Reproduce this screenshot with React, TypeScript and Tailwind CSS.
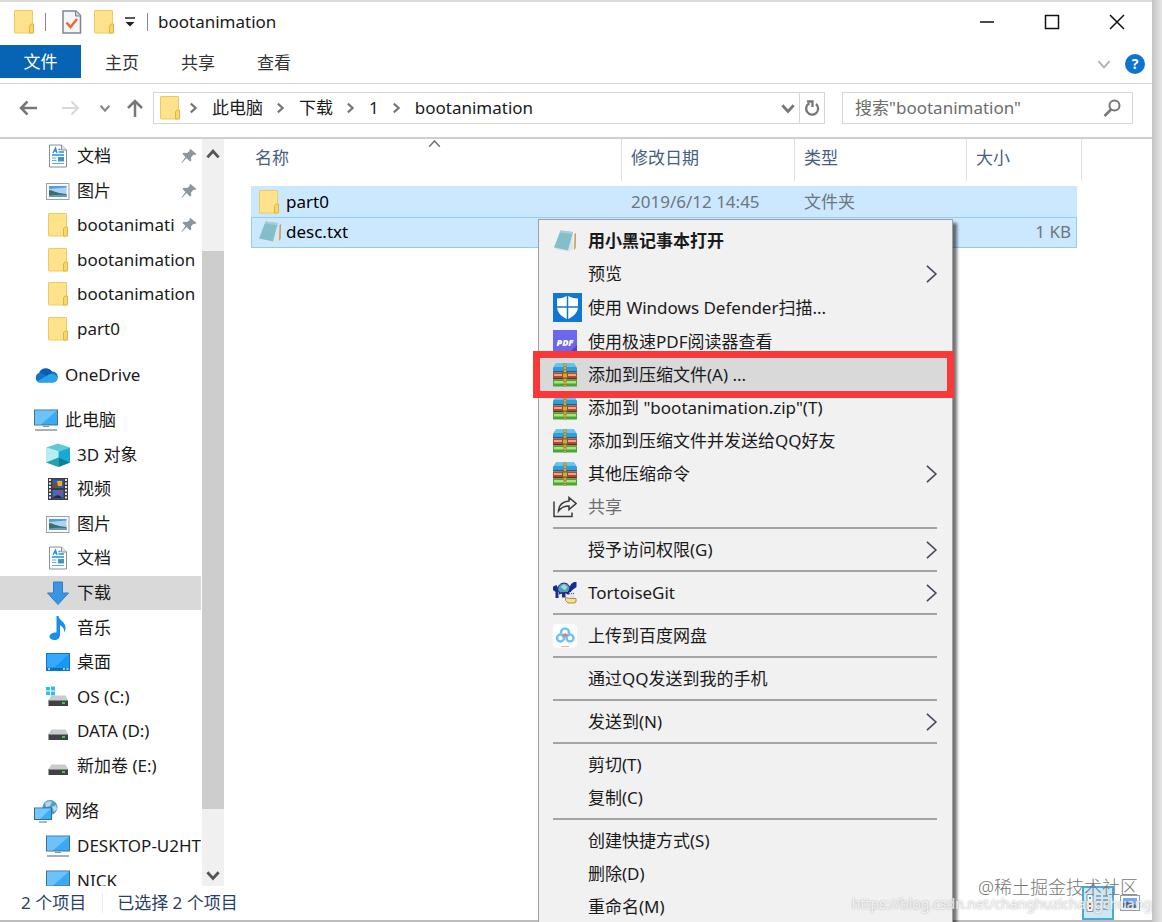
import type { ReactNode } from "react"

const FOLDER_LIGHT = "#ffe38c"

function FolderIcon() {
  return (
    <svg width="20" height="24" viewBox="0 0 20 24" className="shrink-0" aria-hidden="true">
      <rect x="0.5" y="0.5" width="18" height="22.5" rx="0.5" fill={FOLDER_LIGHT} stroke="#eccb5e" />
      <path d="M15.500 23V15.500L17 14h2.500v9z" fill="#f8d667" stroke="#e0b63f" />
    </svg>
  )
}

function DocIcon() {
  return (
    <svg width="24" height="24" viewBox="0 0 24 24" className="shrink-0" aria-hidden="true">
      <path d="M3.500 1h12l5 5v17h-17z" fill="#fff" stroke="#8a9096" />
      <path d="M15.500 1v5h5" fill="#e4e6e8" stroke="#8a9096" />
      <path d="M7 9l2.500-5 1.500 5M8 7h2.500M12.500 5.500h2M12.500 8h5.500" stroke="#2a8fd8" strokeWidth="1.300" fill="none" />
      <path d="M6 11h12" stroke="#1593e0" strokeWidth="1.500" />
      <path d="M6 14h4.500M6 16.500h4.500M6 19.500h12" stroke="#4fb0ea" />
      <rect x="12" y="13" width="6" height="4.500" fill="#4c90c0" />
    </svg>
  )
}

function PictureIcon() {
  return (
    <svg width="24" height="24" viewBox="0 0 24 24" className="shrink-0" aria-hidden="true">
      <rect x="0.500" y="4.500" width="22.500" height="16" fill="#f7f9fa" stroke="#9aa1a8" />
      <rect x="3" y="7" width="17.500" height="11" fill="#a9d4f2" />
      <path d="M3 7h17.500v1.500L3 10z" fill="#5a9be6" />
      <path d="M3 11c4 0 6 3 17.500 4v3H3z" fill="#3a7069" />
      <path d="M3 16.500c6-1 12-1 17.500-.5v2H3z" fill="#6c9bb8" />
    </svg>
  )
}

function CloudIcon() {
  return (
    <svg width="24" height="24" viewBox="0 0 24 24" className="shrink-0" aria-hidden="true">
      <path d="M5.500 19.500A5 5 0 0 1 5 10a7 7 0 0 1 12.500-1.500A5.500 5.500 0 0 1 19 19.500z" fill="#1673c8" />
      <path d="M6 9.500A7 7 0 0 1 17.500 8l1 1.500-5 3.500z" fill="#0c5cb0" />
      <path d="M3 18.500l11-6.500c4-2.500 9.500-.5 9.500 3.500 0 2.500-2 4-4.500 4H6c-1 0-2-.3-3-1z" fill="#2aa3ec" />
    </svg>
  )
}

function MonitorIcon() {
  return (
    <svg width="24" height="24" viewBox="0 0 24 24" className="shrink-0" aria-hidden="true">
      <rect x="0.500" y="2" width="23" height="15" fill="#3aa9f2" stroke="#41718f" />
      <path d="M1 2.500h22L7 16.500H1z" fill="#6cc3fa" />
      <path d="M9 18.500h6" stroke="#7f95a3" />
      <path d="M1 22h22" stroke="#a3b1bb" strokeWidth="2" />
    </svg>
  )
}

function CubeIcon() {
  return (
    <svg width="24" height="24" viewBox="0 0 24 24" className="shrink-0" aria-hidden="true">
      <path d="M0 4.500L12 .5l12 4-11.500 4z" fill="#5fc9d6" />
      <path d="M0 4.500l12.500 4v15.500L0 19.500z" fill="#b4eef0" />
      <path d="M0 19.500l12.500-5V24z" fill="#27a0ad" />
      <path d="M24 4.500l-11.500 4V24L24 19.500z" fill="#18a9d4" />
      <path d="M24 19.500l-11.500-5V24z" fill="#0f7f98" />
    </svg>
  )
}

function VideoIcon() {
  return (
    <svg width="24" height="24" viewBox="0 0 24 24" className="shrink-0" aria-hidden="true">
      <rect x="2" y="1" width="20" height="22" fill="#3b3c40" />
      <path d="M4 2v20M20 2v20" stroke="#e6e6e6" strokeWidth="2" strokeDasharray="2 1.500" />
      <rect x="6.500" y="2.500" width="11" height="8.500" fill="#3c59a8" />
      <rect x="6.500" y="13" width="11" height="8.500" fill="#4767c0" />
      <path d="M11 4h5v5h-4z" fill="#e3b326" />
      <path d="M7 7h4v4H7z" fill="#7a4a2a" />
      <path d="M13 14h2.500v2.500H13z" fill="#d83a2a" />
      <path d="M7 20l5-2 5 3H7z" fill="#1f2b4a" />
    </svg>
  )
}

function DownloadIcon() {
  return (
    <svg width="24" height="24" viewBox="0 0 24 24" className="shrink-0" aria-hidden="true">
      <path d="M7.500 1h9v11h6L12 23.500 1.500 12h6z" fill="#3b93e4" stroke="#2f7ec9" />
    </svg>
  )
}

function MusicIcon() {
  return (
    <svg width="24" height="24" viewBox="0 0 24 24" className="shrink-0" aria-hidden="true">
      <path d="M10.500 0h2c.5 4 7 6 7 11.500 0 2-.5 3.500-1.500 4.500.5-3.500-2-6-4-6.500V19c0 3-2.500 5-5.500 5S3.500 22.500 3.500 20.500s3-4.500 7-4z" fill="#1590ec" />
    </svg>
  )
}

function DesktopIcon() {
  return (
    <svg width="24" height="24" viewBox="0 0 24 24" className="shrink-0" aria-hidden="true">
      <rect x="0.500" y="3.500" width="23" height="17" fill="#1a98f5" stroke="#1479c4" />
      <path d="M1 4h22L9 17H1z" fill="#35a9fb" />
      <path d="M1 19h22" stroke="#0b5fa8" strokeWidth="1.500" />
      <path d="M2 19h2M17 19h2M20.500 19h2" stroke="#d3ebfc" strokeWidth="1.500" />
    </svg>
  )
}

function DriveIcon({ system }: { system?: boolean }) {
  return (
    <svg width="24" height="24" viewBox="0 0 24 24" className="shrink-0" aria-hidden="true">
      {system && <path d="M0 2h4v3.500H0zM5 1.500h4v4H5zM0 6.500h4V10H0zM5 6.500h4v4H5z" fill="#2cc0ea" />}
      <path d="M5.500 10.500h14L22 15H2.500z" fill="#c9cbcc" />
      <rect x="2.500" y="15" width="19.500" height="6" fill="#3f4244" />
      <path d="M2.500 15h19.500v1H2.500z" fill="#85898b" />
      <rect x="16" y="17" width="3" height="2" fill="#38d13e" />
    </svg>
  )
}

function NetworkIcon() {
  return (
    <svg width="24" height="24" viewBox="0 0 24 24" className="shrink-0" aria-hidden="true">
      <circle cx="16" cy="8.500" r="7.500" fill="#4f9fca" />
      <path d="M11 4c3-2 5-2 7-1l-2 4-4 1zM18 8l4-2 1 4-3 3z" fill="#b6d8e6" />
      <rect x="0.500" y="9" width="17" height="11.500" fill="#3fadf3" stroke="#2f6d94" />
      <path d="M1 9.500h16L6 20H1z" fill="#74c7fa" />
      <path d="M5 23h8" stroke="#8ca3b2" strokeWidth="1.500" />
    </svg>
  )
}

function PinIcon() {
  return (
    <svg width="16" height="16" viewBox="0 0 16 16" className="shrink-0" aria-hidden="true">
      <path d="M9.500 1l6 5-1.500 1-1.500-.3L10 9.500l.3 3-1.300 1L5.500 10 1 15l-.5-.5L4.500 9 1.500 6l1-1.300 3.500.3L8.700 3l-.2-1.200z" fill="#8a979f" />
    </svg>
  )
}

function NotebookIcon() {
  return (
    <svg width="24" height="24" viewBox="0 0 24 24" className="shrink-0" aria-hidden="true">
      <path d="M1 18.500l13.500 3 5-18 1 16-4 3L3 20.500z" fill="#dfe6e6" />
      <path d="M7.500 1.500l12.500 1.500-5 18.500L1 18.500z" fill="#83bfca" />
      <path d="M7.500 1.500l12.500 1.500-.7 2L7 3.500z" fill="#a9cfd4" />
      <path d="M21.500 5l1.500-1-.3 15-1.700 2z" fill="#c79b58" />
    </svg>
  )
}

function DefenderIcon() {
  return (
    <svg width="29" height="29" viewBox="0 0 29 29" className="shrink-0" aria-hidden="true">
      <rect width="29" height="29" fill="#0f77d4" />
      <path d="M14.500 2.500c3 2 6.500 3 10.500 3v8c0 6-4.500 10-10.500 13C8.500 23.500 4 19.500 4 13.500v-8c4 0 7.500-1 10.500-3z" fill="#fff" />
      <path d="M14.500 2v25M3 14h23" stroke="#0f77d4" strokeWidth="1.500" />
    </svg>
  )
}

function PdfIcon() {
  return (
    <svg width="24" height="24" viewBox="0 0 24 24" className="shrink-0" aria-hidden="true">
      <rect width="24" height="24" fill="#6a66ee" />
      <path d="M24 15v9h-9z" fill="#4c47c4" />
      <text x="12" y="15.500" textAnchor="middle" fontFamily="Open Sans, sans-serif" fontSize="9" fontWeight="800" fontStyle="italic" fill="#fff">
        PDF
      </text>
    </svg>
  )
}

function ZipIcon() {
  return (
    <svg width="24" height="24" viewBox="0 0 24 24" className="shrink-0" aria-hidden="true">
      <path d="M3 .5h18l3 4.500v4H0V5z" fill="#2f9fd6" />
      <path d="M3 .5h18L23 4H1z" fill="#63c4ee" />
      <path d="M0 8h24v1.500H0z" fill="#1f5f88" />
      <rect y="9.500" width="24" height="6.500" fill="#b5482f" />
      <rect x="1" y="11" width="22" height="2" fill="#e8a48c" />
      <path d="M0 15h24v1.500H0z" fill="#6e2a1c" />
      <rect y="16.500" width="24" height="7" fill="#4aa63a" />
      <rect x="1" y="18" width="22" height="2.500" fill="#a6e57a" />
      <rect x="10.500" y=".5" width="3" height="23" fill="#a8812f" />
      <path d="M12 1v22" stroke="#ecd07a" strokeDasharray="2 1" />
      <rect x="9.500" y="10" width="5" height="5" fill="#d8a53c" stroke="#7a5a1d" />
    </svg>
  )
}

function ShareIcon() {
  return (
    <svg width="24" height="24" viewBox="0 0 24 24" className="shrink-0" fill="none" stroke="#3b3b3b" strokeWidth="1.500" aria-hidden="true">
      <path d="M1 6.500v15h18v-4" />
      <path d="M16 2.500l7 6-7 6V11c-5 0-8 1.500-10.500 5 .5-6.500 4.500-9.500 10.500-10z" />
    </svg>
  )
}

function TortoiseIcon() {
  return (
    <svg width="24" height="24" viewBox="0 0 24 24" className="shrink-0" aria-hidden="true">
      <path d="M0 5.500l3.500-1.500 2 4v9H2.500v-6L0 9z" fill="#1b2c96" />
      <path d="M16 8l2-5 3-2h2.500v5L20 8.500l-2 2v3h-3.500l-2-1.500v4.500H9v-4l-3 1v-3z" fill="#1b2c96" />
      <path d="M4.500 9c.5-9 12-9 12.500-1l-2 3.500-8 .5z" fill="#4c9fb9" stroke="#15216c" />
      <path d="M7.500 6L11 3l3.500 3-2.500 3.500z" fill="#9bd7df" />
      <path d="M12.500 16.500l4 1h6.500v3.500l-2 1h-6l-2.500-2.500z" fill="#f2de95" stroke="#b08f45" />
      <path d="M16.500 11h5v6h-5z" fill="#e3e3ea" />
      <path d="M18 12.500h1M20 12.500h1" stroke="#555" />
    </svg>
  )
}

function NetdiskIcon() {
  return (
    <svg width="24" height="24" viewBox="0 0 24 24" className="shrink-0" fill="none" strokeWidth="2.500" aria-hidden="true">
      <rect width="24" height="24" rx="4" fill="#fdfdfd" />
      <circle cx="12" cy="8.500" r="4" stroke="#6cc3f2" />
      <circle cx="7.500" cy="14" r="3.500" stroke="#6cc3f2" />
      <circle cx="17" cy="14" r="3.500" stroke="#6cc3f2" />
      <path d="M10 12l2-1.500 2 1.500" stroke="#f0707c" />
      <path d="M8 22.500h8" stroke="#f2b3a2" strokeWidth="1" />
    </svg>
  )
}

type ChevronProps = { dir: "up" | "down" | "right"; size: number; color: string; width?: number }

function Chevron({ dir, size, color, width = 2 }: ChevronProps) {
  const d = { up: "M3 11l5-5.500 5 5.500", down: "M3 5.500L8 11l5-5.500", right: "M5.500 3L11 8l-5.500 5" }[dir]
  return (
    <svg width={size} height={size} viewBox="0 0 16 16" fill="none" stroke={color} strokeWidth={width} className="shrink-0" aria-hidden="true">
      <path d={d} />
    </svg>
  )
}

type TreeItem = { icon: ReactNode; label: string; pinned?: boolean; selected?: boolean; root?: boolean }

const quickAccess: TreeItem[] = [
  { icon: <DocIcon />, label: "文档", pinned: true },
  { icon: <PictureIcon />, label: "图片", pinned: true },
  { icon: <FolderIcon />, label: "bootanimati", pinned: true },
  { icon: <FolderIcon />, label: "bootanimation" },
  { icon: <FolderIcon />, label: "bootanimation" },
  { icon: <FolderIcon />, label: "part0" },
]

const oneDrive: TreeItem[] = [{ icon: <CloudIcon />, label: "OneDrive", root: true }]

const thisPc: TreeItem[] = [
  { icon: <MonitorIcon />, label: "此电脑", root: true },
  { icon: <CubeIcon />, label: "3D 对象" },
  { icon: <VideoIcon />, label: "视频" },
  { icon: <PictureIcon />, label: "图片" },
  { icon: <DocIcon />, label: "文档" },
  { icon: <DownloadIcon />, label: "下载", selected: true },
  { icon: <MusicIcon />, label: "音乐" },
  { icon: <DesktopIcon />, label: "桌面" },
  { icon: <DriveIcon system />, label: "OS (C:)" },
  { icon: <DriveIcon />, label: "DATA (D:)" },
  { icon: <DriveIcon />, label: "新加卷 (E:)" },
]

const network: TreeItem[] = [
  { icon: <NetworkIcon />, label: "网络", root: true },
  { icon: <MonitorIcon />, label: "DESKTOP-U2HT" },
  { icon: <MonitorIcon />, label: "NICK" },
]

function TreeGroup({ items, className }: { items: TreeItem[]; className: string }) {
  return (
    <ul className={`grid shrink-0 auto-rows-fr ${className}`}>
      {items.map((item, i) => (
        <li key={i} className="min-h-0">
          <button
            type="button"
            className={`flex h-full w-full items-center overflow-hidden whitespace-nowrap text-left ${item.root ? "pl-[34px]" : "pl-[46px]"} ${item.selected ? "bg-[#d9d9d9]" : ""}`}
          >
            <span className="flex w-6 shrink-0 justify-center">{item.icon}</span>
            <span className="ml-[7px] flex-1">{item.label}</span>
            {item.pinned && (
              <span className="mr-1">
                <PinIcon />
              </span>
            )}
          </button>
        </li>
      ))}
    </ul>
  )
}

type MenuEntry = { label: string; icon?: ReactNode; arrow?: boolean; bold?: boolean; tall?: boolean; disabled?: boolean; active?: boolean }

const menuGroups: MenuEntry[][] = [
  [
    { label: "用小黑记事本打开", icon: <NotebookIcon />, bold: true },
    { label: "预览", arrow: true },
    { label: "使用 Windows Defender扫描...", icon: <DefenderIcon />, tall: true },
    { label: "使用极速PDF阅读器查看", icon: <PdfIcon /> },
    { label: "添加到压缩文件(A) ...", icon: <ZipIcon />, active: true },
    { label: '添加到 "bootanimation.zip"(T)', icon: <ZipIcon /> },
    { label: "添加到压缩文件并发送给QQ好友", icon: <ZipIcon /> },
    { label: "其他压缩命令", icon: <ZipIcon />, arrow: true },
    { label: "共享", icon: <ShareIcon />, disabled: true },
  ],
  [{ label: "授予访问权限(G)", arrow: true }],
  [{ label: "TortoiseGit", icon: <TortoiseIcon />, arrow: true }],
  [{ label: "上传到百度网盘", icon: <NetdiskIcon /> }],
  [{ label: "通过QQ发送到我的手机" }],
  [{ label: "发送到(N)", arrow: true }],
  [{ label: "剪切(T)" }, { label: "复制(C)" }],
  [{ label: "创建快捷方式(S)" }, { label: "删除(D)" }, { label: "重命名(M)" }],
]

function ContextMenu() {
  return (
    <div
      role="menu"
      className="absolute left-[538px] top-[219px] z-10 w-[415px] border border-[#a0a0a0] bg-[#f1f1f1] pb-1 pt-1 text-[#1a1a1a] shadow-[4px_4px_3px_rgba(0,0,0,0.55)]"
    >
      {menuGroups.map((group, g) => (
        <div key={g} role="group">
          {g > 0 && (
            <div className="flex h-2.5 items-center pl-3.5 pr-[15px]">
              <div className="h-0.5 flex-1 bg-[#a3a3a3]" />
            </div>
          )}
          {group.map((entry) => (
            <button
              key={entry.label}
              type="button"
              role="menuitem"
              disabled={entry.disabled}
              className={`relative flex w-full items-center pl-3.5 pr-2 text-left ${entry.tall ? "h-[35px]" : "h-[33px]"} ${entry.active ? "bg-[#d9d9d9]" : ""} ${entry.bold ? "font-bold" : ""} ${entry.disabled ? "text-[#6d6d6d]" : ""}`}
            >
              <span className="flex w-[35px] shrink-0">{entry.icon}</span>
              <span className="flex-1 whitespace-nowrap">{entry.label}</span>
              {entry.arrow && <Chevron dir="right" size={26} color="#4a4560" width={1} />}
              {/* highlight frame round the active entry */}
              {entry.active && <span className="absolute -inset-y-[7px] -left-1.5 -right-0.5 z-10 border-[7px] border-[#fb3838]" />}
            </button>
          ))}
        </div>
      ))}
    </div>
  )
}

function TitleBar() {
  return (
    <header className="flex h-[45px] shrink-0 items-center border-t-2 border-[#dcdcd6] pb-1 pl-3.5">
      <FolderIcon />
      <span className="ml-[11px] h-[18px] w-px bg-[#8a8a8a]" />
      <svg width="20" height="24" viewBox="0 0 20 24" className="ml-4" aria-hidden="true">
        <path d="M1 1h13l4.500 4.500V23H1z" fill="#f4f5f9" stroke="#80848c" strokeWidth="1.500" />
        <path d="M13.500 1v5h5" fill="#cfd3dc" stroke="#80848c" />
        <path d="M4.500 12.500l4 4.500 6.500-8" fill="none" stroke="#ee6a30" strokeWidth="2.500" />
      </svg>
      <span className="ml-3">
        <FolderIcon />
      </span>
      <svg width="12" height="12" viewBox="0 0 12 12" className="ml-2.5" aria-hidden="true">
        <path d="M1 2h10" stroke="#222" strokeWidth="1.500" />
        <path d="M1.500 6h9L6 10.500z" fill="#222" />
      </svg>
      <span className="ml-[11px] h-[18px] w-px bg-[#8a8a8a]" />
      <h1 className="ml-2.5 flex-1">bootanimation</h1>
      <button type="button" aria-label="最小化" className="flex h-full w-[65px] items-center justify-center">
        <svg width="16" height="16" viewBox="0 0 16 16" stroke="#111" strokeWidth="1.500"><path d="M1 8h14" /></svg>
      </button>
      <button type="button" aria-label="最大化" className="flex h-full w-[65px] items-center justify-center">
        <svg width="16" height="16" viewBox="0 0 16 16" fill="none" stroke="#111" strokeWidth="1.500"><path d="M1.500 1.500h13v13h-13z" /></svg>
      </button>
      <button type="button" aria-label="关闭" className="mr-0.5 flex h-full w-[66px] items-center justify-center">
        <svg width="16" height="16" viewBox="0 0 16 16" stroke="#111" strokeWidth="1.500"><path d="M1 1l14 14M15 1L1 15" /></svg>
      </button>
    </header>
  )
}

function RibbonTabs() {
  return (
    <nav className="flex h-[39px] shrink-0 items-start gap-3.5 border-b border-[#d5d5d5] text-[#333]">
      <button type="button" className="h-[33px] w-[81px] bg-[#0763b3] text-white">文件</button>
      <button type="button" className="-ml-1 h-9 w-[62px]">主页</button>
      <button type="button" className="h-9 w-[62px]">共享</button>
      <button type="button" className="h-9 w-[62px]">查看</button>
      <div className="mr-[7px] flex h-[38px] flex-1 items-center justify-end gap-3">
        <Chevron dir="down" size={18} color="#b0b0b0" width={1.5} />
        <button type="button" aria-label="帮助" className="h-5 w-5 rounded-full bg-[#0d74d0] text-sm font-bold leading-5 text-white">?</button>
      </div>
    </nav>
  )
}

function AddressBar() {
  return (
    <div className="flex h-[55px] shrink-0 items-center border-b-2 border-[#cfcfcf] pb-1.5 pl-[19px] pr-[19px]">
      <button type="button" aria-label="后退">
        <svg width="18" height="18" viewBox="0 0 18 18" fill="none" stroke="#777" strokeWidth="2.500"><path d="M18 9H2M8.500 2.500L2 9l6.500 6.500" /></svg>
      </button>
      <button type="button" aria-label="前进" className="ml-[25px]">
        <svg width="18" height="18" viewBox="0 0 18 18" fill="none" stroke="#d8d8d8" strokeWidth="2"><path d="M0 9h16M9.500 2.500L16 9l-6.500 6.500" /></svg>
      </button>
      <button type="button" aria-label="最近位置" className="ml-[18px]">
        <Chevron dir="down" size={14} color="#888" width={2.5} />
      </button>
      <button type="button" aria-label="上移" className="ml-3.5">
        <svg width="18" height="18" viewBox="0 0 18 18" fill="none" stroke="#777" strokeWidth="2.500"><path d="M9 18V2M2 9l7-7 7 7" /></svg>
      </button>
      <div className="ml-[9px] flex h-8 flex-1 items-center border border-[#d5d5d5] pl-1.5">
        <FolderIcon />
        <ol className="-ml-1 flex flex-1 items-center">
          {["此电脑", "下载", "1", "bootanimation"].map((crumb) => (
            <li key={crumb} className="flex items-center">
              <span className="ml-2.5 mr-3">
                <Chevron dir="right" size={14} color="#777" width={2.5} />
              </span>
              <button type="button">{crumb}</button>
            </li>
          ))}
        </ol>
        <button type="button" aria-label="历史记录" className="mr-0.5">
          <Chevron dir="down" size={18} color="#777" width={2.5} />
        </button>
        <button type="button" aria-label="刷新" className="flex h-full w-[25px] items-center justify-center border-l border-[#d5d5d5]">
          <svg width="16" height="18" viewBox="0 0 16 18" fill="none" stroke="#777" strokeWidth="2.300">
            <path d="M12 5A6 6 0 1 1 5.500 4.200" />
            <path d="M3 2.500h5.500V8" />
          </svg>
        </button>
      </div>
      <label className="ml-[17px] flex h-8 w-[291px] items-center border border-[#d5d5d5] pl-3 pr-2.5">
        <input type="text" aria-label="搜索" placeholder={'搜索"bootanimation"'} className="min-w-0 flex-1 outline-none placeholder:text-[#6d6d6d]" />
        <svg width="20" height="18" viewBox="0 0 20 18" fill="none" stroke="#777" strokeWidth="2" aria-hidden="true">
          <circle cx="12.500" cy="6.500" r="5" />
          <path d="M9 10.500L2.500 17" strokeWidth="2.500" />
        </svg>
      </label>
    </div>
  )
}

function Sidebar() {
  return (
    <aside className="flex w-[226px] shrink-0 overflow-hidden">
      <div className="flex w-[201px] flex-col overflow-hidden">
        <div className="flex h-full flex-col gap-[11px]">
          <TreeGroup items={quickAccess} className="h-[207px]" />
          <TreeGroup items={oneDrive} className="h-[35px]" />
          <TreeGroup items={thisPc} className="h-[380px]" />
          <TreeGroup items={network} className="h-[104px]" />
        </div>
      </div>
      <div className="ml-px flex w-[22px] flex-col items-center bg-[#f0f0f0]">
        <span className="flex h-[112px] pt-1.5">
          <Chevron dir="up" size={18} color="#555" width={2.5} />
        </span>
        <span className="w-full flex-1 bg-[#cdcdcd]" />
        <span className="flex h-[77px] items-end pb-0.5">
          <Chevron dir="down" size={18} color="#555" width={2.5} />
        </span>
      </div>
    </aside>
  )
}

function FileTable() {
  const head = "h-[42px] border-r border-[#e2e2e2] pl-[9px] leading-[38px]"
  return (
    <main className="min-w-0 flex-1 overflow-hidden pl-[25px]">
      <table className="w-[831px] table-fixed border-separate border-spacing-0 text-left">
        <colgroup>
          <col className="w-[371px]" />
          <col className="w-[173px]" />
          <col className="w-[172px]" />
          <col className="w-[110px]" />
          <col className="w-[5px]" />
        </colgroup>
        <thead className="text-[#46607f]">
          <tr>
            <th className="relative h-[47px] p-0 align-top font-normal">
              <div className="h-[42px] border-r border-[#e2e2e2] pl-1 leading-[38px]">名称</div>
              <span className="absolute left-[175px] -top-1">
                <Chevron dir="up" size={17} color="#777" width={1.5} />
              </span>
            </th>
            <th className="p-0 align-top font-normal"><div className={head}>修改日期</div></th>
            <th className="p-0 align-top font-normal"><div className={head}>类型</div></th>
            <th className="p-0 align-top font-normal"><div className="h-[42px] pl-[9px] leading-[38px]">大小</div></th>
            <td className="p-0 align-top"><div className="h-[42px] border-r border-[#e2e2e2]" /></td>
          </tr>
        </thead>
        <tbody className="text-[#6d7680]">
          <tr>
            <td className="h-[31px] bg-[#cce8ff] p-0 text-black">
              <div className="flex items-center gap-[7px] pl-2"><FolderIcon />part0</div>
            </td>
            <td className="bg-[#cce8ff] p-0 pl-[9px]">2019/6/12 14:45</td>
            <td className="bg-[#cce8ff] p-0 pl-[9px]">文件夹</td>
            <td className="bg-[#cce8ff] p-0" />
            <td className="p-0" />
          </tr>
          <tr>
            <td className="h-[31px] border border-r-0 border-[#8ecbff] bg-[#cce8ff] p-0 pb-0.5 text-black">
              <div className="flex items-center gap-1 pl-1.5"><NotebookIcon />desc.txt</div>
            </td>
            <td className="border-y border-[#8ecbff] bg-[#cce8ff] p-0" />
            <td className="border-y border-[#8ecbff] bg-[#cce8ff] p-0" />
            <td className="border border-l-0 border-[#8ecbff] bg-[#cce8ff] p-0 pb-0.5 pr-[5px] text-right">1 KB</td>
            <td className="p-0" />
          </tr>
        </tbody>
      </table>
    </main>
  )
}

function StatusBar() {
  return (
    <footer className="flex h-9 shrink-0 items-center border-b-2 border-[#bdbdbd] pl-[21px] pr-3 text-[#2b3f66]">
      <span>2 个项目</span>
      <span className="ml-4 h-5 w-px bg-[#ececec]" />
      <span className="ml-3.5 flex-1">已选择 2 个项目</span>
      <button type="button" aria-label="详细信息" className="flex h-[34px] w-8 items-center justify-center border-2 border-[#46a9dc] bg-[#cbe8f4]">
        <svg width="24" height="20" viewBox="0 0 24 20" fill="none" aria-hidden="true">
          <path d="M1 1.500h6v17H1z" fill="#fff" stroke="#8b959b" />
          <path d="M10 3h5M17 3h5M10 7h5M17 7h5M10 11h5M17 11h5M10 16h5M17 16h5" stroke="#5d6b75" />
          <path d="M4 4v2" stroke="#2e9ad0" strokeWidth="2" />
          <path d="M4 10v2M4 14v2" stroke="#d8513d" strokeWidth="2" />
        </svg>
      </button>
      <button type="button" aria-label="大缩略图" className="ml-1.5">
        <svg width="20" height="16" viewBox="0 0 20 16" aria-hidden="true">
          <rect x="0.500" y="0.500" width="19" height="15" fill="#fff" stroke="#969ea5" />
          <rect x="3" y="3" width="14" height="10" fill="#78a8ee" />
          <path d="M3 8l5-1 4 2 5 1v3H3z" fill="#315d7c" />
        </svg>
      </button>
    </footer>
  )
}

export default function App() {
  return (
    <div className="relative flex h-screen overflow-hidden bg-white font-['Noto_Sans','Noto_Sans_CJK_SC',sans-serif] text-[17px] leading-6 text-[#1a1a1a]">
      <div className="flex min-w-0 flex-1 flex-col">
        <TitleBar />
        <RibbonTabs />
        <AddressBar />
        <div className="flex min-h-0 flex-1">
          <Sidebar />
          <FileTable />
        </div>
        <StatusBar />
      </div>
      <div className="w-2.5 shrink-0 bg-linear-to-r from-[#c4c4c4] to-[#e6e6e6]" />
      <ContextMenu />
      <div className="absolute bottom-2.5 right-2.5 z-20 flex flex-col items-end whitespace-nowrap">
        <span className="mr-3.5 text-lg font-light leading-[18px] text-[#777]">@稀土掘金技术社区</span>
        <span className="text-sm leading-4 text-white/80 [text-shadow:0_0_2px_#999]">https://blog.csdn.net/changhuzichangchuang</span>
      </div>
    </div>
  )
}
